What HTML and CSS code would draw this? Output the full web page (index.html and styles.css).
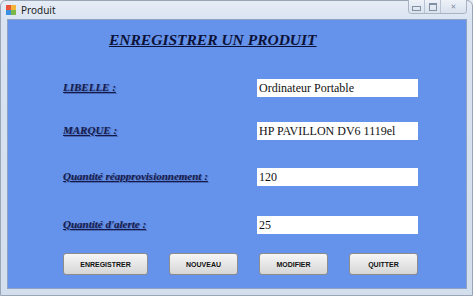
FILE: index.html
```html
<!DOCTYPE html>
<html lang="fr">
<head>
  <meta charset="UTF-8" />
  <title>Produit</title>
  <link rel="stylesheet" href="styles.css">
</head>
<body>
  <div class="window">
    <div class="titlebar">
      <span class="app-icon">
        <svg width="10" height="10" viewBox="0 0 10 10">
          <rect x="0" y="0" width="5" height="5" fill="#e8533a" />
          <rect x="5" y="0" width="5" height="5" fill="#f2b53a" />
          <rect x="0" y="5" width="5" height="5" fill="#3a8fe0" />
          <rect x="5" y="5" width="5" height="5" fill="#7ab648" />
        </svg>
      </span>
      <span class="caption">Produit</span>
      <div class="win-buttons">
        <span class="wbtn wbtn-min"><i class="min-glyph"></i></span>
        <span class="wbtn wbtn-max"><i class="max-glyph"></i></span>
        <span class="wbtn wbtn-close">&#x2715;</span>
      </div>
    </div>

    <div class="client">
      <h1 class="form-title">ENREGISTRER UN PRODUIT</h1>

      <div class="form-rows">
        <div class="form-row row-1">
          <label for="libelle">LIBELLE :</label>
          <input type="text" id="libelle" value="Ordinateur Portable" />
        </div>
        <div class="form-row row-2">
          <label for="marque">MARQUE :</label>
          <input type="text" id="marque" value="HP PAVILLON DV6 1119el" />
        </div>
        <div class="form-row row-3">
          <label for="qteReappro">Quantité réapprovisionnement :</label>
          <input type="text" id="qteReappro" value="120" />
        </div>
        <div class="form-row row-4">
          <label for="qteAlerte">Quantité d'alerte :</label>
          <input type="text" id="qteAlerte" value="25" />
        </div>
      </div>

      <div class="actions">
        <button class="btn btn-wide">ENREGISTRER</button>
        <button class="btn">NOUVEAU</button>
        <button class="btn">MODIFIER</button>
        <button class="btn">QUITTER</button>
      </div>
    </div>
  </div>
</body>
</html>
```

FILE: styles.css
```css
html, body {
  margin: 0;
  padding: 0;
}
body {
  width: 473px;
  height: 296px;
  overflow: hidden;
  background: #e9edf3;
  font-family: 'Liberation Serif', 'Times New Roman', serif;
}
.window {
  width: 473px;
  height: 296px;
  box-sizing: border-box;
  border: 1px solid #9aa6b6;
  border-radius: 6px 6px 0 0;
  background: linear-gradient(to bottom, #e6ecf6, #d9e3f1 20px, #d4dfee);
  display: flex;
  flex-direction: column;
}

/* Title bar */
.titlebar {
  height: 18px;
  display: flex;
  align-items: center;
  padding-left: 5px;
  position: relative;
}
.app-icon {
  display: flex;
  width: 10px;
  height: 10px;
  margin-right: 5px;
}
.caption {
  font-family: 'Noto Sans', 'DejaVu Sans', sans-serif;
  font-size: 10px;
  color: #1e1e1e;
}
.win-buttons {
  position: absolute;
  top: -1px;
  right: 5px;
  display: flex;
  border: 1px solid #a8b3c3;
  border-top: none;
  border-radius: 0 0 4px 4px;
  overflow: hidden;
}
.wbtn {
  height: 13px;
  width: 15px;
  display: flex;
  align-items: center;
  justify-content: center;
  background: linear-gradient(to bottom, #eef2f8, #d8e1ee);
  border-right: 1px solid #b9c3d1;
  color: #8290a4;
  font-size: 7px;
  font-family: 'DejaVu Sans', sans-serif;
}
.wbtn-close {
  width: 25px;
  border-right: none;
}
.min-glyph {
  width: 7px;
  height: 3px;
  border: 1px solid #8290a4;
  margin-top: 3px;
}
.max-glyph {
  width: 6px;
  height: 5px;
  border: 1px solid #8290a4;
  border-top-width: 2px;
}

/* Client area */
.client {
  margin: 0 5px 0 6px;
  height: 270px;
  background: #6592ea;
  border: 1px solid #8fa3c4;
  box-sizing: border-box;
  display: flex;
  flex-direction: column;
}
.form-title {
  margin: 10px 0 0 101px;
  font-size: 15.5px;
  font-style: italic;
  font-weight: bold;
  text-decoration: underline;
  color: #0c1238;
  line-height: 19px;
}

.form-rows {
  display: flex;
  flex-direction: column;
  margin-top: 30px;
  padding-left: 55px;
}
.form-row {
  display: flex;
  align-items: center;
  height: 18px;
}
.row-2 { margin-top: 25px; }
.row-3 { margin-top: 28px; }
.row-4 { margin-top: 30px; }
.form-row label {
  width: 194px;
  font-size: 11px;
  font-weight: bold;
  font-style: italic;
  text-decoration: underline;
  color: #141a4c;
  text-shadow: 1px 1px 1px rgba(20, 30, 80, 0.35);
  margin-top: -3px;
}
.form-row input {
  width: 161px;
  height: 18px;
  box-sizing: border-box;
  border: none;
  padding: 0 2px;
  margin: 0;
  background: #fff;
  font-family: 'Liberation Serif', 'Times New Roman', serif;
  font-size: 12px;
  color: #111;
  outline: none;
}

/* Buttons */
.actions {
  display: flex;
  margin-top: 19px;
  padding-left: 55px;
  gap: 21px;
}
.btn {
  width: 69px;
  height: 22px;
  padding: 0;
  border: 1px solid #8c8c8c;
  border-radius: 3px;
  background: linear-gradient(to bottom, #f6f6f6, #e6e6e6 50%, #d6d6d6);
  font-family: 'Liberation Sans', Arial, sans-serif;
  font-size: 7px;
  font-weight: bold;
  color: #111;
}
.btn-wide {
  width: 85px;
}
```
